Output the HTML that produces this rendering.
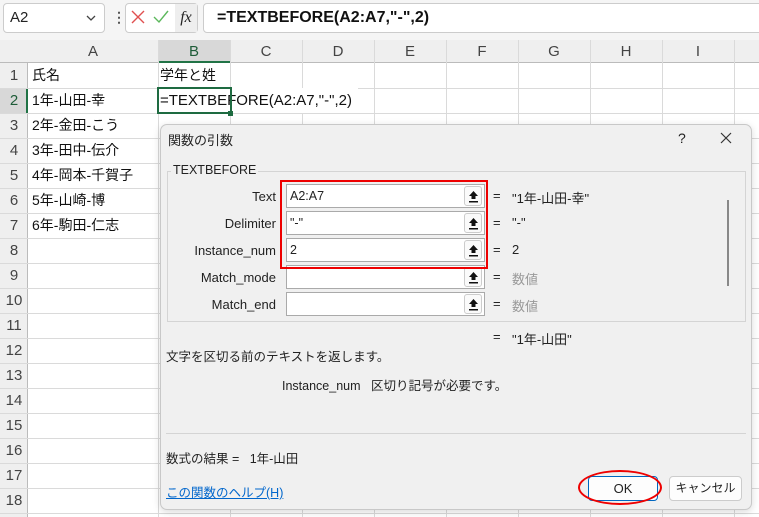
<!DOCTYPE html>
<html><head><meta charset="utf-8"><style>
*{margin:0;padding:0;box-sizing:border-box}
body{width:759px;height:517px;overflow:hidden;background:#fff;font-family:"Liberation Sans","Noto Sans CJK JP",sans-serif;position:relative;color:#222}
.a{position:absolute}
.hl{position:absolute;height:1px;background:#dadada}
.vl{position:absolute;width:1px;background:#dadada}
.ch{position:absolute;top:40px;height:23px;line-height:23px;text-align:center;font-size:15px;color:#444}
.rh{position:absolute;left:0;width:28px;text-align:center;font-size:15px;color:#444;height:25px;line-height:25px}
.cell{position:absolute;font-size:14px;height:25px;line-height:25px;color:#111}
.lbl{position:absolute;right:483px;font-size:13px;text-align:right;color:#222}
.inp{position:absolute;left:286px;width:199px;height:24px;border:1px solid #aaa;background:#fff;font-size:12.5px;line-height:22px;padding-left:3px}
.btn{position:absolute;right:2px;top:1px;width:18px;height:20px;border:1px solid #ccc;border-radius:3px;background:#fafafa}
.btn svg{position:absolute;left:3px;top:3px}
.eq{position:absolute;left:493px;font-size:13px}
.val{position:absolute;left:512px;font-size:13px}
</style></head><body>
<div class="a" style="left:0;top:0;width:759px;height:40px;background:#f5f5f5"></div>
<div class="a" style="left:3px;top:3px;width:102px;height:30px;border:1px solid #ccc;border-radius:4px;background:#fff;font-size:15px;line-height:28px;padding-left:6px">A2
<svg class="a" style="right:8px;top:11px" width="10" height="6"><path d="M1 1L5 5L9 1" fill="none" stroke="#444" stroke-width="1.3"/></svg></div>
<div class="a" style="left:112px;top:9px;font-size:14px;color:#555;font-weight:bold">&#8942;</div>
<div class="a" style="left:125px;top:3px;width:73px;height:30px;border:1px solid #ccc;border-radius:4px;background:#fff"></div>
<svg class="a" style="left:131px;top:10px" width="14" height="14"><path d="M1 1L13 13M13 1L1 13" stroke="#e05050" stroke-width="1.4"/></svg>
<svg class="a" style="left:153px;top:10px" width="16" height="14"><path d="M1 7L6 12L15 1" fill="none" stroke="#5cb85c" stroke-width="1.4"/></svg>
<div class="a" style="left:175px;top:4px;width:22px;height:28px;background:#eee;font-family:'Liberation Serif',serif;font-style:italic;font-size:16px;line-height:28px;text-align:center">fx</div>
<div class="a" style="left:203px;top:3px;width:560px;height:30px;border:1px solid #ccc;border-radius:4px;background:#fff;font-size:16px;line-height:28px;padding-left:13px;font-weight:bold;color:#111">=TEXTBEFORE(A2:A7,"-",2)</div>
<div class="a" style="left:0;top:40px;width:759px;height:23px;background:#efefef;border-bottom:1px solid #bbb"></div>
<div class="a" style="left:0;top:63px;width:28px;height:454px;background:#efefef;border-right:1px solid #bbb"></div>
<div class="a" style="left:158px;top:40px;width:72px;height:23px;background:#d8d8d8;border-bottom:2px solid #217346"></div>
<div class="a" style="left:0;top:88px;width:28px;height:25px;background:#d8d8d8;border-right:2px solid #217346"></div>
<div class="ch" style="left:28px;width:130px">A</div>
<div class="ch" style="left:158px;width:72px;color:#1e5c38">B</div>
<div class="ch" style="left:230px;width:72px">C</div>
<div class="ch" style="left:302px;width:72px">D</div>
<div class="ch" style="left:374px;width:72px">E</div>
<div class="ch" style="left:446px;width:72px">F</div>
<div class="ch" style="left:518px;width:72px">G</div>
<div class="ch" style="left:590px;width:72px">H</div>
<div class="ch" style="left:662px;width:72px">I</div>
<div class="vl" style="left:158px;top:40px;height:477px"></div>
<div class="vl" style="left:230px;top:40px;height:477px"></div>
<div class="vl" style="left:302px;top:40px;height:477px"></div>
<div class="vl" style="left:374px;top:40px;height:477px"></div>
<div class="vl" style="left:446px;top:40px;height:477px"></div>
<div class="vl" style="left:518px;top:40px;height:477px"></div>
<div class="vl" style="left:590px;top:40px;height:477px"></div>
<div class="vl" style="left:662px;top:40px;height:477px"></div>
<div class="vl" style="left:734px;top:40px;height:477px"></div>
<div id="rows"></div>
<script>
var h='';for(var i=1;i<=18;i++){var t=63+(i-1)*25;h+='<div class="hl" style="left:0;top:'+(t+25)+'px;width:759px"></div><div class="rh" style="top:'+t+'px;'+(i==2?'color:#1e5c38':'')+'">'+i+'</div>';}
document.getElementById('rows').innerHTML=h;
</script>
<div class="cell" style="left:32px;top:63px">氏名</div>
<div class="cell" style="left:160px;top:63px">学年と姓</div>
<div class="cell" style="left:32px;top:88px">1年-山田-幸</div>
<div class="cell" style="left:32px;top:113px">2年-金田-こう</div>
<div class="cell" style="left:32px;top:138px">3年-田中-伝介</div>
<div class="cell" style="left:32px;top:163px">4年-岡本-千賀子</div>
<div class="cell" style="left:32px;top:188px">5年-山崎-博</div>
<div class="cell" style="left:32px;top:213px">6年-駒田-仁志</div>
<div class="cell" style="left:160px;top:88px;background:#fff;white-space:nowrap;padding-right:6px;font-size:15px">=TEXTBEFORE(A2:A7,"-",2)</div>
<div class="a" style="left:157px;top:87px;width:75px;height:27px;border:2px solid #1e6b41"></div>
<div class="a" style="left:228px;top:111px;width:5px;height:5px;background:#1e6b41"></div>
<div class="a" style="left:160px;top:124px;width:592px;height:386px;background:#f0f0f0;border:1px solid #c8c8c8;border-radius:7px;box-shadow:0 2px 8px rgba(0,0,0,.15)"></div>
<div class="a" style="left:168px;top:130px;font-size:13px">関数の引数</div>
<div class="a" style="left:678px;top:130px;font-size:14px">?</div>
<svg class="a" style="left:720px;top:132px" width="12" height="12"><path d="M1 1L11 11M11 1L1 11" stroke="#333" stroke-width="1.2"/></svg>
<div class="a" style="left:167px;top:171px;width:579px;height:151px;border:1px solid #d4d4d4"></div>
<div class="a" style="left:171px;top:163px;font-size:12.5px;background:#f0f0f0;padding:0 2px">TEXTBEFORE</div>
<div class="lbl" style="top:189px">Text</div>
<div class="lbl" style="top:216px">Delimiter</div>
<div class="lbl" style="top:243px">Instance_num</div>
<div class="lbl" style="top:270px">Match_mode</div>
<div class="lbl" style="top:297px">Match_end</div>
<div id="inps"></div>
<script>
var s='',v=['A2:A7','"-"','2','',''];for(var i=0;i<5;i++){s+='<div class="inp" style="top:'+(184+i*27)+'px">'+v[i]+'<div class="btn"><svg width="11" height="13"><path d="M5.5 1L1 6H3.5V9H7.5V6H10Z" fill="#111"/><rect x="1" y="11" width="9" height="1.5" fill="#111"/></svg></div></div>';}
document.getElementById('inps').innerHTML=s;
</script>
<div class="a" style="left:280px;top:180px;width:208px;height:89px;border:2px solid #e00"></div>
<div class="eq" style="top:188px">=</div><div class="val" style="top:188px">"1年-山田-幸"</div>
<div class="eq" style="top:215px">=</div><div class="val" style="top:215px">"-"</div>
<div class="eq" style="top:242px">=</div><div class="val" style="top:242px">2</div>
<div class="eq" style="top:269px">=</div><div class="val" style="top:269px;color:#999">数値</div>
<div class="eq" style="top:296px">=</div><div class="val" style="top:296px;color:#999">数値</div>
<div class="a" style="left:727px;top:200px;width:2px;height:86px;background:#888"></div>
<div class="eq" style="top:329px">=</div><div class="val" style="top:329px">"1年-山田"</div>
<div class="a" style="left:166px;top:346px;font-size:12.5px">文字を区切る前のテキストを返します。</div>
<div class="a" style="left:282px;top:375px;font-size:12.5px">Instance_num&nbsp;&nbsp; 区切り記号が必要です。</div>
<div class="a" style="left:166px;top:433px;width:580px;height:1px;background:#d4d4d4"></div>
<div class="a" style="left:166px;top:448px;font-size:12.5px">数式の結果 =&nbsp;&nbsp; 1年-山田</div>
<div class="a" style="left:166px;top:482px;font-size:12.5px;color:#0066cc;text-decoration:underline">この関数のヘルプ(H)</div>
<div class="a" style="left:588px;top:476px;width:70px;height:25px;border:1px solid #0067c0;border-radius:4px;background:#fdfdfd;font-size:13px;text-align:center;line-height:23px">OK</div>
<div class="a" style="left:669px;top:476px;width:73px;height:25px;border:1px solid #ccc;border-radius:4px;background:#fdfdfd;font-size:12px;text-align:center;line-height:23px">キャンセル</div>
<div class="a" style="left:578px;top:470px;width:84px;height:35px;border:2px solid #e00;border-radius:50%"></div>
</body></html>
